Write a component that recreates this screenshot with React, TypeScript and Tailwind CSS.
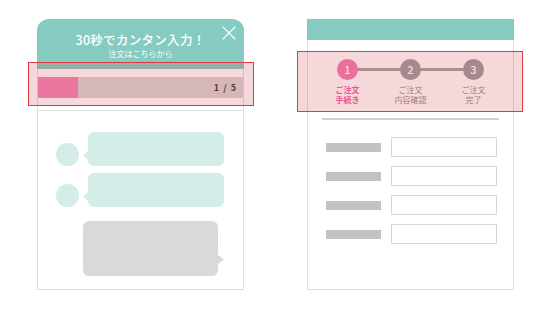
import { X } from 'lucide-react';

const font = { fontFamily: '"Noto Sans CJK JP", "Noto Sans", sans-serif' };

function Overlay({ className }: { className: string }) {
  return (
    <div
      className={`pointer-events-none absolute border-[1.5px] border-[#dc3b44] bg-[rgba(210,60,70,0.2)] ${className}`}
    />
  );
}

function ChatRow() {
  return (
    <div className="flex items-end pl-[18px]">
      <div className="h-[23px] w-[23px] rounded-full bg-[#d4ede9]" />
      <svg width="5" height="9" viewBox="0 0 5 9" className="mb-[6px] ml-[4px]">
        <polygon points="0,4.5 5,0 5,9" fill="#d4ede9" />
      </svg>
      <div className="h-[34px] w-[136px] rounded-[6px] bg-[#d4ede9]" />
    </div>
  );
}

const steps = [
  { n: '1', label: ['ご注文', '手続き'], active: true },
  { n: '2', label: ['ご注文', '内容確認'], active: false },
  { n: '3', label: ['ご注文', '完了'], active: false },
];

export default function App() {
  return (
    <div className="flex h-[309px] w-[550px] bg-white pl-[37px] pt-[19px]" style={font}>
      {/* chat input card */}
      <div className="relative flex h-[271px] w-[207px] flex-col rounded-t-[12px] border-x border-b border-[#dedede]">
        <div className="-mx-px flex h-[50px] flex-col items-center rounded-t-[12px] bg-[#86cbc1] pt-[13px] text-white">
          <div className="text-[12.5px] font-medium leading-[16px] tracking-[0.3px]">30秒でカンタン入力！</div>
          <div className="mt-[1px] text-[8px] leading-[10px]">注文はこちらから</div>
          <X className="absolute right-[2px] top-[2px] h-[24px] w-[24px]" strokeWidth={1.1} />
        </div>
        <div className="border-b border-[#dedede] pb-[12px] pt-[8px]">
          <div className="flex h-[21px] items-center bg-[#d6d6d6]">
            <div className="h-full w-[40px] bg-[#ef86b6]" />
            <div className="ml-auto mr-[6px] text-[9px] font-bold tracking-[1px] text-[#3a3a3a]">1 / 5</div>
          </div>
        </div>
        <div className="flex flex-col pt-[21px]">
          <div className="flex flex-col gap-[7px]">
            <ChatRow />
            <ChatRow />
          </div>
          <div className="mt-[14px] flex items-end pl-[45px]">
            <div className="h-[55px] w-[135px] rounded-[6px] bg-[#d9d9d9]" />
            <svg width="6" height="9" viewBox="0 0 6 9" className="mb-[12px]">
              <polygon points="0,0 6,4.5 0,9" fill="#d9d9d9" />
            </svg>
          </div>
        </div>
        <Overlay className="left-[-10px] top-[43px] h-[44px] w-[226px]" />
      </div>

      {/* order form card */}
      <div className="relative ml-[63px] flex h-[271px] w-[207px] flex-col border border-t-0 border-[#dedede]">
        <div className="-mx-px h-[21px] bg-[#86cbc1]" />
        <div className="relative mt-[19px] grid grid-cols-3 px-[8px]">
          <div className="absolute left-[40px] right-[40px] top-[9px] h-[3px] bg-[#a2a2a2]" />
          {steps.map((s) => (
            <div key={s.n} className="relative flex flex-col items-center">
              <div
                className={`flex h-[21px] w-[21px] items-center justify-center rounded-full text-[11px] font-medium text-white ${
                  s.active ? 'bg-[#ed7fb2]' : 'bg-[#9c9c9f]'
                }`}
              >
                {s.n}
              </div>
              <div
                className={`mt-[5px] text-center text-[8px] leading-[10px] ${
                  s.active ? 'font-bold text-[#ee5fa3]' : 'text-[#8f8f92]'
                }`}
              >
                <div>{s.label[0]}</div>
                <div>{s.label[1]}</div>
              </div>
            </div>
          ))}
        </div>
        <div className="mx-[14px] mt-[13px] h-[2px] bg-[#d0d0d0]" />
        <div className="mt-[17px] flex flex-col gap-[9px] pl-[18px]">
          {[0, 1, 2, 3].map((i) => (
            <div key={i} className="flex items-center">
              <div className="h-[9px] w-[55px] bg-[#c2c2c2]" />
              <div className="ml-[10px] h-[20px] w-[106px] border border-[#d6d6d6]" />
            </div>
          ))}
        </div>
        <Overlay className="left-[-11px] top-[32px] h-[61px] w-[226px]" />
      </div>
    </div>
  );
}
